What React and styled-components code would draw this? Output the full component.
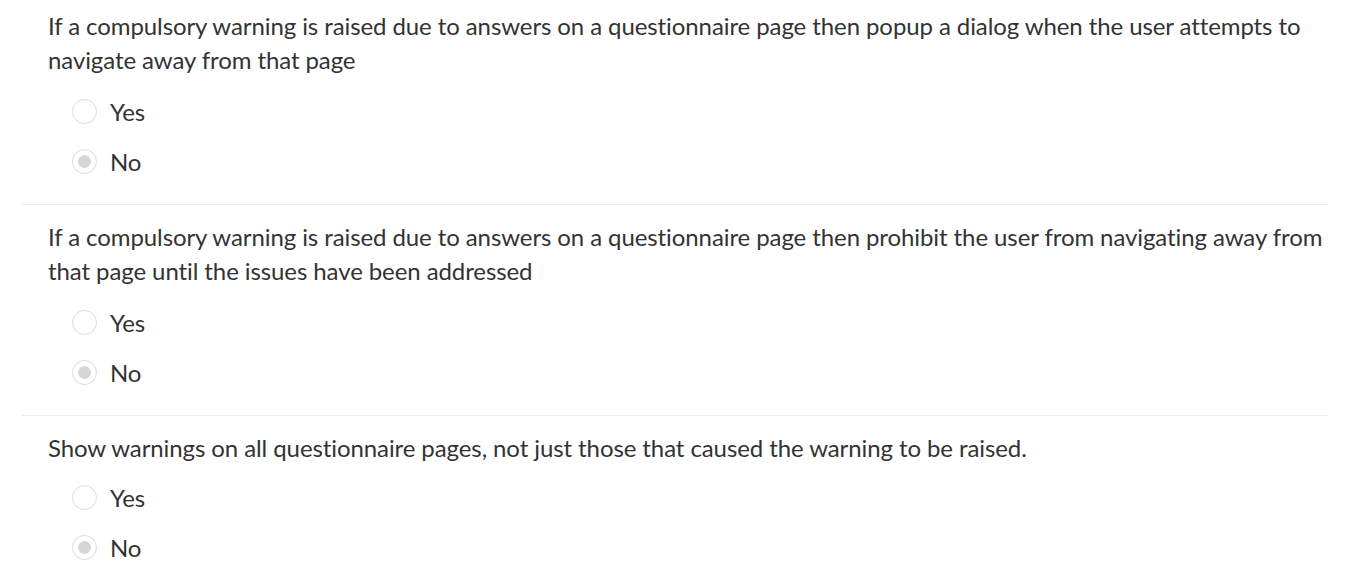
import React from "react";
import styled, { createGlobalStyle } from "styled-components";

const Global = createGlobalStyle`
  html, body { margin: 0; padding: 0; background: #fff; }
  body { font-family: "Lato", "Liberation Sans", sans-serif; color: #333; }
`;

const Page = styled.div`
  padding: 0 44px 0 22px;
`;

const Section = styled.section`
  padding: ${(p) => (p.$first ? "9px" : "15px")} 0 18px 26px;
  border-top: ${(p) => (p.$first ? "none" : "1px solid #ececec")};
`;

const Question = styled.p`
  margin: 0 0 ${(p) => (p.$tight ? "7px" : "9px")};
  font-size: 24px;
  line-height: 34px;
  letter-spacing: -0.09px;
`;

const Options = styled.div`
  display: flex;
  flex-direction: column;
  padding-left: 24px;
`;

const Option = styled.label`
  display: flex;
  align-items: center;
  height: 50px;
  gap: 13px;
  font-size: 24px;
  letter-spacing: -0.09px;
`;

const Circle = styled.span`
  box-sizing: border-box;
  flex: none;
  width: 25px;
  height: 25px;
  border-radius: 50%;
  border: 1.5px solid #dcdcdc;
  background: #fff;
  display: flex;
  align-items: center;
  justify-content: center;
  &::after {
    content: "";
    width: 13px;
    height: 13px;
    border-radius: 50%;
    background: ${(p) => (p.$checked ? "#d6d6d6" : "transparent")};
  }
`;

const questions = [
  { text: "If a compulsory warning is raised due to answers on a questionnaire page then popup a dialog when the user attempts to navigate away from that page" },
  { text: "If a compulsory warning is raised due to answers on a questionnaire page then prohibit the user from navigating away from that page until the issues have been addressed" },
  { text: "Show warnings on all questionnaire pages, not just those that caused the warning to be raised.", tight: true },
];

export default function App() {
  return (
    <Page>
      <Global />
      {questions.map((q, i) => (
        <Section key={i} $first={i === 0}>
          <Question $tight={q.tight}>{q.text}</Question>
          <Options>
            <Option>
              <Circle />
              Yes
            </Option>
            <Option>
              <Circle $checked />
              No
            </Option>
          </Options>
        </Section>
      ))}
    </Page>
  );
}
